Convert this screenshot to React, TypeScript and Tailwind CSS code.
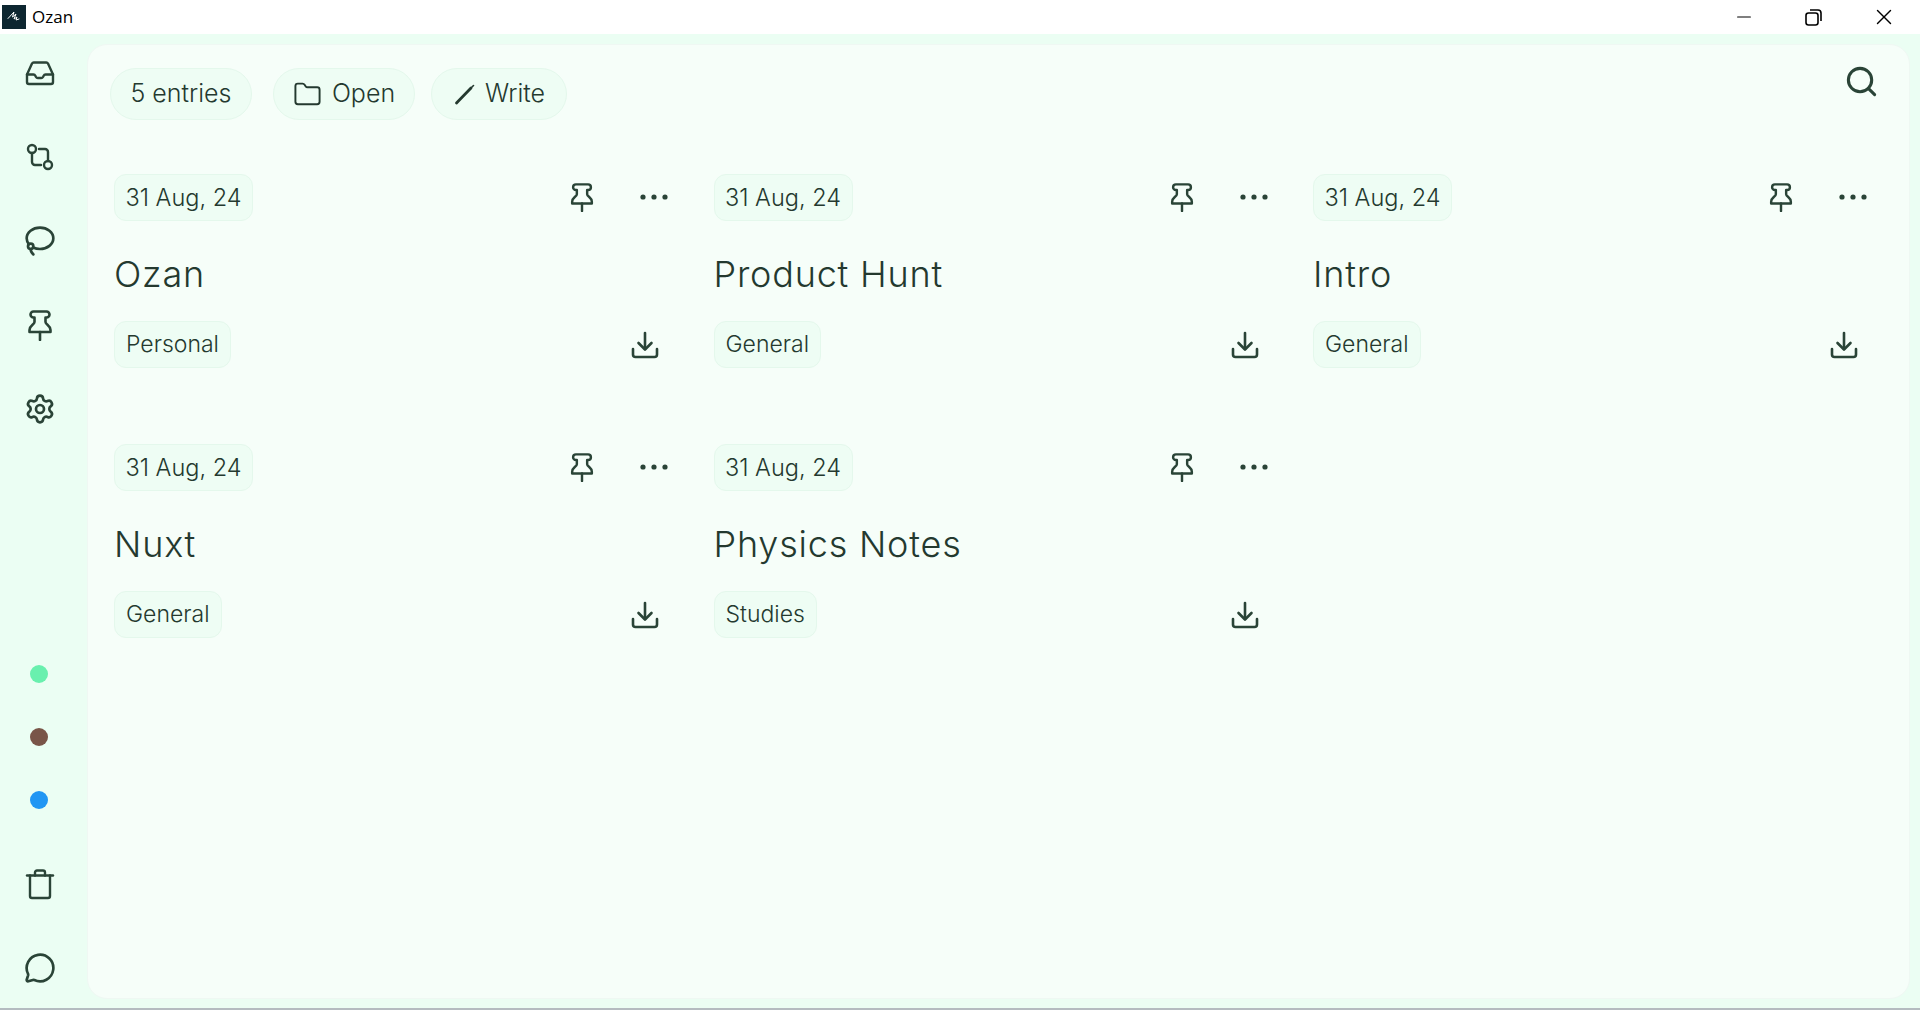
import { Folder, Lasso, MessageCircle, Search, Settings, Minus, X } from "lucide-react"

const cards = [
  { title: "Ozan", tag: "Personal" },
  { title: "Product Hunt", tag: "General" },
  { title: "Intro", tag: "General" },
  { title: "Nuxt", tag: "General" },
  { title: "Physics Notes", tag: "Studies" },
]

function Inbox() {
  return (
    <svg width="32" height="32" viewBox="0 0 32 32" fill="none" stroke="currentColor" strokeWidth="2.4" strokeLinecap="round" strokeLinejoin="round">
      <path d="M3 17.500 8 6.500a2 2 0 0 1 1.800-1h12.400a2 2 0 0 1 1.800 1l5 11" />
      <path d="M3 17.500V25a2 2 0 0 0 2 2h22a2 2 0 0 0 2-2v-7.500h-7.500c-1 0-1.500.5-2 1.500l-.5 1c-.4.7-1 1-1.800 1h-3.400c-.8 0-1.400-.3-1.800-1l-.5-1c-.5-1-1-1.500-2-1.500z" />
    </svg>
  )
}

function Branch() {
  return (
    <svg width="32" height="32" viewBox="0 0 32 32" fill="none" stroke="currentColor" strokeWidth="2.4" strokeLinecap="round" strokeLinejoin="round">
      <circle cx="8" cy="8" r="4" />
      <circle cx="24" cy="24" r="4" />
      <path d="M8 12v9a3 3 0 0 0 3 3h6" />
      <path d="M15 8h6a3 3 0 0 1 3 3v9" />
    </svg>
  )
}

function PinIcon({ size = 32 }: { size?: number }) {
  return (
    <svg width={size} height={size} viewBox="0 0 32 32" fill="none" stroke="currentColor" strokeWidth="2.6" strokeLinecap="round" strokeLinejoin="round">
      <path d="M16 23v8" />
      <path d="M9.500 2.500h13a3 3 0 0 1 0 6H21.500V13c0 2.500 5 3.500 5 8v2h-21v-2c0-4.500 5-5.500 5-8V8.500H9.500a3 3 0 0 1 0-6z" />
    </svg>
  )
}

function Trash() {
  return (
    <svg width="32" height="32" viewBox="0 0 32 32" fill="none" stroke="currentColor" strokeWidth="2.4" strokeLinecap="round" strokeLinejoin="round">
      <path d="M3 7.500h26" />
      <path d="M6 7.500V28a2 2 0 0 0 2 2h16a2 2 0 0 0 2-2V7.500" />
      <path d="M11 7.500V4.500a2 2 0 0 1 2-2h6a2 2 0 0 1 2 2v3" />
    </svg>
  )
}

function Download() {
  return (
    <svg width="30" height="30" viewBox="0 0 30 30" fill="none" stroke="currentColor" strokeWidth="2.600" strokeLinecap="round" strokeLinejoin="round">
      <path d="M15 3v16" />
      <path d="m8.500 13 6.500 6.500 6.500-6.500" />
      <path d="M3 19v5.500a2.500 2.500 0 0 0 2.500 2.500h19a2.500 2.500 0 0 0 2.500-2.500V19" />
    </svg>
  )
}

function Dots() {
  return (
    <svg width="30" height="30" viewBox="0 0 30 30" fill="currentColor">
      <circle cx="4" cy="15" r="2.600" />
      <circle cx="15" cy="15" r="2.600" />
      <circle cx="26" cy="15" r="2.600" />
    </svg>
  )
}

function Pen() {
  return (
    <svg width="24" height="24" viewBox="0 0 24 24" fill="none" stroke="currentColor" strokeLinecap="round">
      <path d="M3.500 21 18 6" strokeWidth="2.800" />
      <path d="M19 5l1.500-1.500" strokeWidth="1.600" />
    </svg>
  )
}

function Logo() {
  return (
    <div className="w-[24px] h-[24px] bg-[#0d2630] flex items-center justify-center text-white">
      <svg width="16" height="16" viewBox="0 0 16 16" fill="none" stroke="currentColor" strokeWidth="1" strokeLinecap="round">
        <path d="M2 9.500 8 3 6.500 8 10 5 8 10l3-2-1 3 3-1" />
      </svg>
    </div>
  )
}

function TitleBar() {
  return (
    <div className="h-[34px] shrink-0 bg-white flex items-center justify-between pl-[2px] pr-[23px] text-black">
      <div className="flex items-center gap-[6px]">
        <Logo />
        <span className="text-[17px] font-['Open_Sans',sans-serif]">Ozan</span>
      </div>
      <div className="flex items-center gap-[46px]">
        <Minus size={22} strokeWidth={1.200} />
        <svg width="24" height="24" viewBox="0 0 24 24" fill="none" stroke="currentColor" strokeWidth="1.600" className="-mt-[1px]">
          <rect x="5" y="8" width="12" height="12" rx="2.500" />
          <path d="M9 5h8a3 3 0 0 1 3 3v8" />
        </svg>
        <X size={26} strokeWidth={1.300} />
      </div>
    </div>
  )
}

function Sidebar() {
  return (
    <aside className="w-[87px] shrink-0 flex flex-col items-center pt-[23px] pb-[24px] pr-[7px] text-[#2a4437]">
      <div className="flex flex-col items-center gap-[52px]">
        <Inbox />
        <Branch />
        <Lasso size={32} strokeWidth={2} />
        <PinIcon />
        <Settings size={32} strokeWidth={2} />
      </div>
      <div className="mt-auto flex flex-col items-center gap-[45px] pr-[3px]">
        <div className="w-[18px] h-[18px] rounded-full bg-[#69f0ae]" />
        <div className="w-[18px] h-[18px] rounded-full bg-[#795548]" />
        <div className="w-[18px] h-[18px] rounded-full bg-[#2196f3]" />
      </div>
      <div className="mt-[59px] flex flex-col items-center gap-[52px]">
        <Trash />
        <MessageCircle size={32} strokeWidth={2} />
      </div>
    </aside>
  )
}

function Toolbar() {
  return (
    <div className="flex items-center justify-between pl-[22px] pr-[30px] pt-[23px]">
      <div className="flex items-center text-[25px] font-light">
        <div className="h-[52px] w-[142px] rounded-full border border-[#e4f8ec] bg-[#eefdf4] flex items-center justify-center">5 entries</div>
        <div className="ml-[21px] h-[52px] w-[142px] rounded-full border border-[#e4f8ec] bg-[#eefdf4] flex items-center justify-center gap-[10px]">
          <Folder size={29} strokeWidth={1.600} />
          Open
        </div>
        <div className="ml-[16px] h-[52px] w-[136px] rounded-full border border-[#e4f8ec] bg-[#eefdf4] flex items-center justify-center gap-[8px]">
          <Pen />
          Write
        </div>
      </div>
      <Search size={35} strokeWidth={2.100} className="text-[#2a4437] -mt-[26px]" />
    </div>
  )
}

function Card({ title, tag }: { title: string; tag: string }) {
  return (
    <div className="relative h-[193px]">
      <div className="flex items-center">
        <span className="h-[47px] w-[139px] rounded-[12px] border border-[#e4f8ec] bg-[#eefdf4] flex items-center justify-center text-[23.500px] font-light">31 Aug, 24</span>
        <div className="ml-[314px] flex items-center gap-[42px] text-[#2a4437] -mt-[2px]">
          <PinIcon size={30} />
          <Dots />
        </div>
      </div>
      <h2 className="mt-[30px] h-[46px] flex items-center text-[36px] font-light tracking-[0.8px]">{title}</h2>
      <div className="mt-[24px] flex items-center justify-between w-[556px]">
        <span className="h-[47px] px-[11px] rounded-[12px] border border-[#e4f8ec] bg-[#eefdf4] flex items-center text-[23px] font-light">{tag}</span>
        <span className="text-[#2a4437] mr-[10px]"><Download /></span>
      </div>
    </div>
  )
}

export default function App() {
  return (
    <div className="w-[1920px] h-[1010px] flex flex-col overflow-hidden bg-[#ebfef3] text-[#24392f] font-['Inter',sans-serif]">
      <TitleBar />
      <div className="flex-1 flex min-h-0">
        <Sidebar />
        <main className="flex-1 mt-[10px] mb-[9px] mr-[10px] rounded-[20px] border border-[#eff8f3] bg-[#f6fef9]">
          <Toolbar />
          <div className="grid grid-cols-[560px_560px_560px] gap-x-[39.500px] gap-y-[77px] pl-[26px] pt-[54px]">
            {cards.map((c) => (
              <Card key={c.title} title={c.title} tag={c.tag} />
            ))}
          </div>
        </main>
      </div>
      <div className="h-[2px] shrink-0 bg-[#b4bcc0]" />
    </div>
  )
}
